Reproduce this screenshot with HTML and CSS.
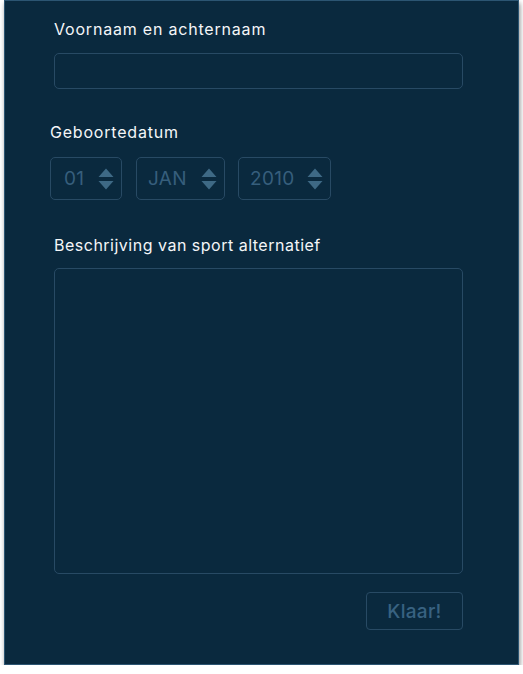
FILE: index.html
```html
<!DOCTYPE html>
<html>
<head>
<meta charset="utf-8">
<link rel="stylesheet" href="styles.css">
</head>
<body>
<div class="panel">
  <form class="form">
    <label class="label">Voornaam en achternaam</label>
    <div class="input"></div>

    <label class="label label-date">Geboortedatum</label>
    <div class="date-row">
      <div class="spin spin-day"><span>01</span><svg class="arrows" viewBox="0 0 16 22"><path d="M8 0.5 L15.5 9 H0.5 Z M0.5 13 H15.5 L8 21.5 Z"/></svg></div>
      <div class="spin spin-month"><span>JAN</span><svg class="arrows" viewBox="0 0 16 22"><path d="M8 0.5 L15.5 9 H0.5 Z M0.5 13 H15.5 L8 21.5 Z"/></svg></div>
      <div class="spin spin-year"><span>2010</span><svg class="arrows" viewBox="0 0 16 22"><path d="M8 0.5 L15.5 9 H0.5 Z M0.5 13 H15.5 L8 21.5 Z"/></svg></div>
    </div>

    <label class="label label-desc">Beschrijving van sport alternatief</label>
    <div class="textarea"></div>

    <div class="actions">
      <button type="button" class="btn">Klaar!</button>
    </div>
  </form>
</div>
</body>
</html>
```
FILE: styles.css
```css
html, body {
  margin: 0;
  padding: 0;
  background: #ffffff;
}
body {
  font-family: "Inter", "Noto Sans", sans-serif;
}
.panel {
  margin-left: 4px;
  width: 513px;
  height: 663px;
  background: #0a293e;
  border: 1px solid #2c5572;
  box-shadow: 1px 3px 5px rgba(0, 0, 0, 0.45);
}
.form {
  display: flex;
  flex-direction: column;
  padding: 17px 0 0 49px;
}
.label {
  display: block;
  color: #f4f6f8;
  font-size: 16px;
  line-height: 22px;
  height: 22px;
  letter-spacing: 0.8px;
}
.label-desc {
  margin-top: 34px;
  letter-spacing: 0.5px;
}
.input {
  margin-top: 13px;
  width: 407px;
  height: 34px;
  border: 1px solid #284a64;
  border-radius: 5px;
}
.label-date {
  margin-top: 32px;
  margin-left: -4px;
}
.date-row {
  display: flex;
  gap: 13px;
  margin-top: 14px;
  margin-left: -4px;
}
.spin {
  flex: none;
  height: 41px;
  border: 1px solid #284a64;
  border-radius: 5px;
  display: flex;
  align-items: center;
  justify-content: space-between;
  padding: 0 7px 0 13px;
  color: #365e7c;
  font-size: 19px;
  letter-spacing: 0.3px;
}
.spin-day { width: 50px; margin-right: 1px; }
.spin-month { width: 69px; padding-left: 11px; }
.spin-year { width: 73px; padding-left: 11px; }
.arrows {
  flex: none;
  width: 16px;
  height: 22px;
  fill: #3e6985;
}
.textarea {
  margin-top: 12px;
  width: 407px;
  height: 304px;
  border: 1px solid #284a64;
  border-radius: 5px;
}
.actions {
  display: flex;
  justify-content: flex-end;
  width: 409px;
  margin-top: 18px;
}
.btn {
  width: 97px;
  height: 38px;
  background: transparent;
  border: 1px solid #284a64;
  border-radius: 4px;
  color: #386281;
  font-family: inherit;
  font-size: 19px;
  font-weight: 500;
  letter-spacing: 0.3px;
  padding: 0;
}
```
